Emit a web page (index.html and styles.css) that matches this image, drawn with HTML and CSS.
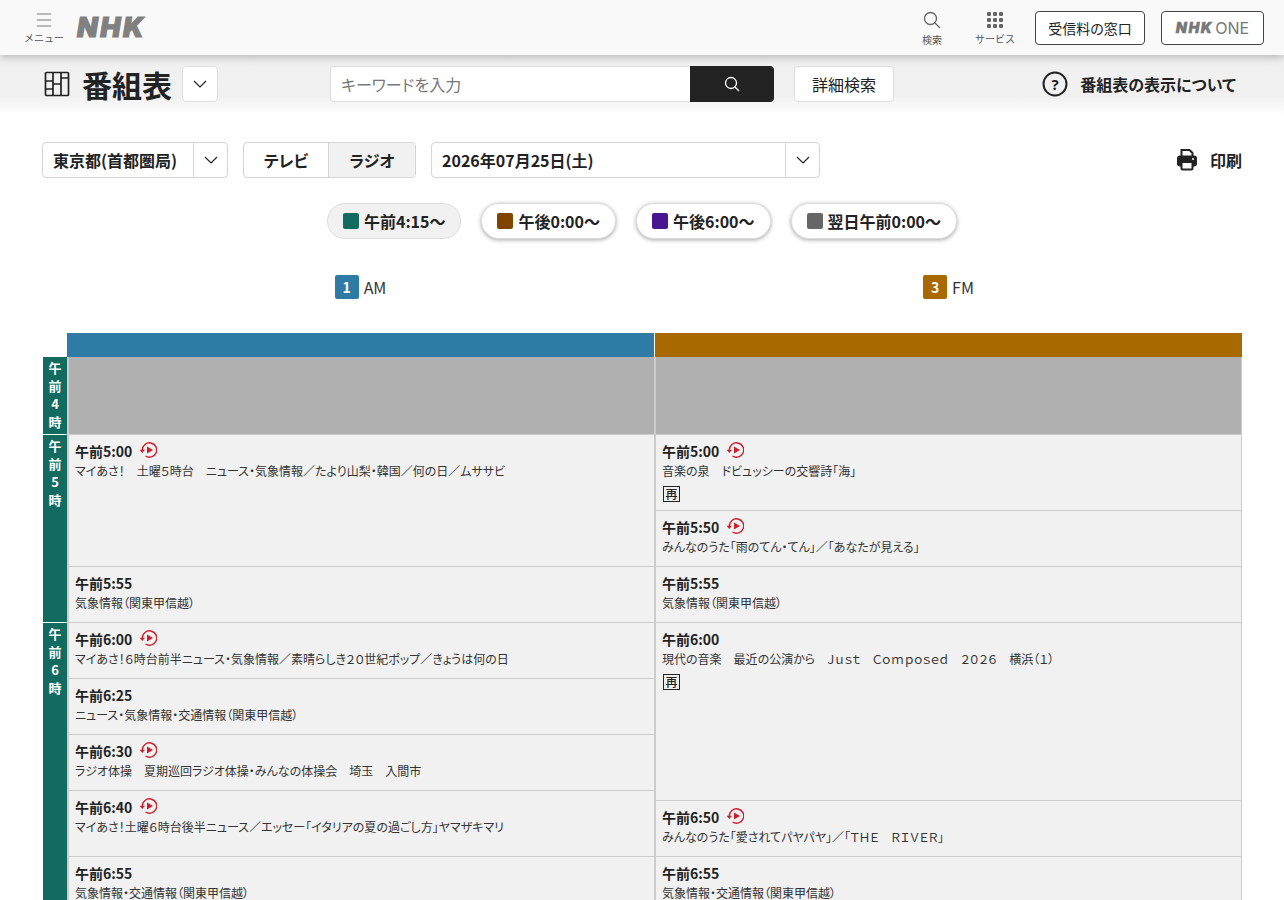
FILE: index.html
```html
<!DOCTYPE html>
<html lang="ja">
<head>
  <meta charset="UTF-8">
  <meta name="viewport" content="width=device-width, initial-scale=1.0">
  <title>番組表</title>
  <link rel="stylesheet" href="styles.css">
</head>
<body>
  <header class="topbar">
    <div class="topbar-left">
      <a class="nav-btn menu-btn">
        <svg width="14" height="14" viewBox="0 0 14 14"><path d="M0 1h14M0 7h14M0 13h14" stroke="#777" stroke-width="1.200" fill="none"/></svg>
        <span>メニュー</span>
      </a>
      <span class="nhk-logo">NHK</span>
    </div>
    <div class="topbar-right">
      <a class="nav-btn search-btn">
        <svg width="18" height="18" viewBox="0 0 18 18"><circle cx="7.500" cy="7.500" r="6" stroke="#666" stroke-width="1.300" fill="none"/><path d="M12 12l5 5" stroke="#666" stroke-width="1.300"/></svg>
        <span>検索</span>
      </a>
      <a class="nav-btn service-btn">
        <svg width="16" height="16" viewBox="0 0 16 16" fill="#666">
          <rect x="0" y="0" width="4" height="4" rx="1"/><rect x="6" y="0" width="4" height="4" rx="1"/><rect x="12" y="0" width="4" height="4" rx="1"/>
          <rect x="0" y="6" width="4" height="4" rx="1"/><rect x="6" y="6" width="4" height="4" rx="1"/><rect x="12" y="6" width="4" height="4" rx="1"/>
          <rect x="0" y="12" width="4" height="4" rx="1"/><rect x="6" y="12" width="4" height="4" rx="1"/><rect x="12" y="12" width="4" height="4" rx="1"/>
        </svg>
        <span>サービス</span>
      </a>
      <a class="outline-btn fee-btn">受信料の窓口</a>
      <a class="outline-btn one-btn"><span class="one-nhk">NHK</span><span>ONE</span></a>
    </div>
  </header>

  <section class="title-band">
    <div class="title-left">
      <svg class="title-icon" width="26" height="26" viewBox="0 0 26 26" fill="none" stroke="#222" stroke-width="1.700"><rect x="1.500" y="1.500" width="23" height="23" rx="1"/><path d="M9 1.500v23M17 1.500v23M1.500 10h7.500M1.500 18h7.500M9 13h8M17 7h7.500"/></svg>
      <h1>番組表</h1>
      <button class="chevron-box title-chevron"><svg class="chevron" width="14" height="8" viewBox="0 0 14 8"><path d="M1 1l6 6 6-6" stroke="#222" stroke-width="1.200" fill="none"/></svg></button>
    </div>
    <div class="search">
      <input class="search-input" type="text" placeholder="キーワードを入力">
      <button class="search-submit"><svg width="16" height="16" viewBox="0 0 16 16"><circle cx="7" cy="7" r="5.500" stroke="#fff" stroke-width="1.300" fill="none"/><path d="M11 11l4 4" stroke="#fff" stroke-width="1.300"/></svg></button>
    </div>
    <button class="detail-btn">詳細検索</button>
    <a class="about-link">
      <svg width="26" height="26" viewBox="0 0 26 26"><circle cx="13" cy="13" r="11.500" stroke="#222" stroke-width="2" fill="none"/><text x="13" y="18.500" text-anchor="middle" class="about-mark">?</text></svg>
      <span>番組表の表示について</span>
    </a>
  </section>

  <section class="toolbar">
    <div class="select area-select">
      <span class="select-label">東京都(首都圏局)</span>
      <span class="select-arrow"><svg width="14" height="8" viewBox="0 0 14 8"><path d="M1 1l6 6 6-6" stroke="#222" stroke-width="1.200" fill="none"/></svg></span>
    </div>
    <div class="tabs">
      <a class="tab">テレビ</a>
      <a class="tab tab-active">ラジオ</a>
    </div>
    <div class="select date-select">
      <span class="select-label">2026年07月25日(土)</span>
      <span class="select-arrow"><svg width="14" height="8" viewBox="0 0 14 8"><path d="M1 1l6 6 6-6" stroke="#222" stroke-width="1.200" fill="none"/></svg></span>
    </div>
    <a class="print-link">
      <svg width="22" height="22" viewBox="0 0 22 22">
        <path d="M5.500 1h8l3 3v5h-11z" fill="#fff" stroke="#222" stroke-width="2"/>
        <rect x="1" y="6.500" width="20" height="11" rx="3" fill="#222"/>
        <rect x="5.500" y="13" width="11" height="7.500" rx="1" fill="#fff" stroke="#222" stroke-width="2"/>
        <circle cx="17" cy="10" r="1" fill="#fff"/>
      </svg>
      <span>印刷</span>
    </a>
  </section>

  <nav class="jump">
    <a class="pill pill-active"><i class="swatch swatch-morning"></i>午前4:15～</a>
    <a class="pill"><i class="swatch swatch-noon"></i>午後0:00～</a>
    <a class="pill"><i class="swatch swatch-evening"></i>午後6:00～</a>
    <a class="pill"><i class="swatch swatch-night"></i>翌日午前0:00～</a>
  </nav>

  <main class="schedule">
    <div class="hours">
      <div class="hour hour-4"><span>午</span><span>前</span><span>4</span><span>時</span></div>
      <div class="hour hour-5"><span>午</span><span>前</span><span>5</span><span>時</span></div>
      <div class="hour hour-6"><span>午</span><span>前</span><span>6</span><span>時</span></div>
    </div>

    <div class="channel channel-am">
      <div class="channel-label"><b class="badge badge-am">1</b>AM</div>
      <div class="channel-bar bar-am"></div>
      <div class="no-program"></div>
      <article class="prog slot-132">
        <h3>午前5:00<svg class="replay"><use href="#replay"/></svg></h3>
        <p>マイあさ！　土曜５時台　ニュース・気象情報／たより山梨・韓国／何の日／ムササビ</p>
      </article>
      <article class="prog slot-56">
        <h3>午前5:55</h3>
        <p>気象情報（関東甲信越）</p>
      </article>
      <article class="prog slot-56">
        <h3>午前6:00<svg class="replay"><use href="#replay"/></svg></h3>
        <p>マイあさ！６時台前半ニュース・気象情報／素晴らしき２０世紀ポップ／きょうは何の日</p>
      </article>
      <article class="prog slot-56">
        <h3>午前6:25</h3>
        <p>ニュース・気象情報・交通情報（関東甲信越）</p>
      </article>
      <article class="prog slot-56">
        <h3>午前6:30<svg class="replay"><use href="#replay"/></svg></h3>
        <p>ラジオ体操　夏期巡回ラジオ体操・みんなの体操会　埼玉　入間市</p>
      </article>
      <article class="prog slot-66">
        <h3>午前6:40<svg class="replay"><use href="#replay"/></svg></h3>
        <p>マイあさ！土曜６時台後半ニュース／エッセー「イタリアの夏の過ごし方」ヤマザキマリ</p>
      </article>
      <article class="prog slot-56">
        <h3>午前6:55</h3>
        <p>気象情報・交通情報（関東甲信越）</p>
      </article>
    </div>

    <div class="channel channel-fm">
      <div class="channel-label"><b class="badge badge-fm">3</b>FM</div>
      <div class="channel-bar bar-fm"></div>
      <div class="no-program"></div>
      <article class="prog slot-76">
        <h3>午前5:00<svg class="replay"><use href="#replay"/></svg></h3>
        <p>音楽の泉　ドビュッシーの交響詩「海」</p>
        <span class="re-mark">再</span>
      </article>
      <article class="prog slot-56">
        <h3>午前5:50<svg class="replay"><use href="#replay"/></svg></h3>
        <p>みんなのうた「雨のてん・てん」／「あなたが見える」</p>
      </article>
      <article class="prog slot-56">
        <h3>午前5:55</h3>
        <p>気象情報（関東甲信越）</p>
      </article>
      <article class="prog slot-178">
        <h3>午前6:00</h3>
        <p>現代の音楽　最近の公演から　Ｊｕｓｔ　Ｃｏｍｐｏｓｅｄ　２０２６　横浜（１）</p>
        <span class="re-mark">再</span>
      </article>
      <article class="prog slot-56">
        <h3>午前6:50<svg class="replay"><use href="#replay"/></svg></h3>
        <p>みんなのうた「愛されてパヤパヤ」／「ＴＨＥ　ＲＩＶＥＲ」</p>
      </article>
      <article class="prog slot-56">
        <h3>午前6:55</h3>
        <p>気象情報・交通情報（関東甲信越）</p>
      </article>
    </div>
  </main>

  <svg class="defs" width="0" height="0">
    <symbol id="replay" viewBox="0 0 18 18">
      <path d="M3.300 9A7.200 7.200 0 1 1 6.500 15" stroke="#c8202c" stroke-width="1.400" fill="none"/>
      <path d="M0.600 8.800h5.400L3.300 12z" fill="#c8202c"/>
      <path d="M8 5.500l6 3.500-6 3.500z" fill="#c8202c"/>
    </symbol>
  </svg>
</body>
</html>
```

FILE: styles.css
```css
* {
  box-sizing: border-box;
}

html, body {
  margin: 0;
  padding: 0;
}

body {
  height: 900px;
  overflow: hidden;
  background-color: #fff;
  color: #222;
  font-family: "Noto Sans CJK JP", "Noto Sans", sans-serif;
  font-feature-settings: "palt";
}

a {
  color: inherit;
  text-decoration: none;
}

button {
  font-family: inherit;
  font-feature-settings: inherit;
  cursor: pointer;
}

.defs {
  position: absolute;
}

/* top bar */
.topbar {
  position: relative;
  z-index: 2;
  display: flex;
  justify-content: space-between;
  align-items: center;
  height: 55px;
  padding: 0 20px 0 24px;
  background-color: #f9f9f9;
  box-shadow: 0 2px 8px rgba(0, 0, 0, 0.25);
}

.topbar-left, .topbar-right {
  display: flex;
  align-items: center;
}

.nav-btn {
  display: flex;
  flex-direction: column;
  align-items: center;
  gap: 5px;
  font-size: 10px;
  line-height: 12px;
  color: #555;
  white-space: nowrap;
  font-feature-settings: normal;
}

.menu-btn {
  width: 40px;
  margin-top: 2px;
}

.nhk-logo {
  margin-left: 13px;
  font-family: "Inter", sans-serif;
  font-size: 27px;
  font-weight: 900;
  font-style: italic;
  letter-spacing: 2.500px;
  color: #808080;
  -webkit-text-stroke: 1px #808080;
  paint-order: stroke;
}

.search-btn {
  margin-right: 33px;
  margin-top: 1px;
}

.service-btn {
  margin-right: 20px;
  margin-top: 1px;
}

.outline-btn {
  display: flex;
  align-items: center;
  justify-content: center;
  height: 34px;
  background-color: #fff;
  border: 1px solid #444;
  border-radius: 4px;
}

.fee-btn {
  width: 110px;
  font-size: 14px;
  margin-right: 16px;
}

.one-btn {
  width: 103px;
  gap: 2px;
  font-family: "Inter", sans-serif;
  font-size: 16px;
  color: #777;
}

.one-nhk {
  font-weight: 900;
  font-style: italic;
  font-size: 14.500px;
  letter-spacing: 1.500px;
  -webkit-text-stroke: 0.4px #777;
}

/* title band */
.title-band {
  display: flex;
  align-items: center;
  height: 60px;
  padding: 0 48px 3px 44px;
  background: linear-gradient(#f0f0f0 0, #f1f1f1 70%, #fff 100%);
}

.title-left {
  display: flex;
  align-items: center;
  width: 286px;
}

.title-icon {
  margin-right: 12px;
}

h1 {
  margin: 0 10px 0 0;
  font-size: 30px;
  line-height: 36px;
  font-weight: 700;
  color: #222;
  white-space: nowrap;
}

.chevron-box, .detail-btn {
  background-color: #fff;
  border: 1px solid #ddd;
  border-radius: 4px;
}

.title-chevron {
  display: flex;
  align-items: center;
  justify-content: center;
  width: 36px;
  height: 36px;
  padding: 0;
}

.search {
  display: flex;
  width: 444px;
  height: 36px;
}

.search-input {
  flex: 1;
  min-width: 0;
  padding: 0 10px;
  font-family: inherit;
  font-feature-settings: inherit;
  font-size: 16px;
  background-color: #fff;
  border: 1px solid #ddd;
  border-right: none;
  border-radius: 4px 0 0 4px;
  outline: none;
}

.search-input::placeholder {
  color: #777;
}

.search-submit {
  display: flex;
  align-items: center;
  justify-content: center;
  width: 84px;
  margin-left: -1px;
  padding: 0;
  background-color: #222;
  border: none;
  border-radius: 0 4px 4px 0;
}

.detail-btn {
  width: 100px;
  height: 36px;
  margin-left: 20px;
  font-size: 16px;
  color: #222;
}

.about-link {
  display: flex;
  align-items: center;
  gap: 12px;
  margin-left: auto;
  font-size: 16px;
  font-weight: 700;
}

.about-mark {
  font-family: "Noto Sans", sans-serif;
  font-size: 15px;
  font-weight: 700;
  fill: #222;
}

/* toolbar */
.toolbar {
  display: flex;
  align-items: center;
  height: 36px;
  margin-top: 27px;
  padding: 0 42px;
}

.select {
  display: flex;
  height: 36px;
  background-color: #fff;
  border: 1px solid #d5d5d5;
  border-radius: 4px;
}

.select-label {
  flex: 1;
  padding-left: 10px;
  font-size: 16px;
  line-height: 34px;
  font-weight: 700;
  white-space: nowrap;
}

.select-arrow {
  display: flex;
  align-items: center;
  justify-content: center;
  width: 34px;
  border-left: 1px solid #d5d5d5;
}

.area-select {
  width: 186px;
}

.date-select {
  width: 389px;
}

.tabs {
  display: flex;
  width: 173px;
  height: 36px;
  margin: 0 15px;
  border: 1px solid #d5d5d5;
  border-radius: 4px;
  overflow: hidden;
}

.tab {
  width: 84px;
  text-align: center;
  font-size: 16px;
  line-height: 34px;
  font-weight: 700;
}

.tab-active {
  width: 87px;
  background-color: #f1f1f1;
  border-left: 1px solid #d5d5d5;
}

.print-link {
  display: flex;
  align-items: center;
  gap: 12px;
  margin-left: auto;
  font-size: 16px;
  font-weight: 700;
}

/* time jump */
.jump {
  display: flex;
  justify-content: center;
  gap: 20px;
  margin-top: 25px;
}

.pill {
  display: flex;
  align-items: center;
  gap: 5px;
  height: 36px;
  padding: 0 15px;
  font-size: 16px;
  font-weight: 700;
  background-color: #fff;
  border: 1px solid #ddd;
  border-radius: 18px;
  box-shadow: 0 1px 4px rgba(0, 0, 0, 0.35);
}

.pill-active {
  background-color: #f1f1f1;
  box-shadow: none;
}

.swatch {
  width: 16px;
  height: 16px;
  border-radius: 2px;
}

.swatch-morning {
  background-color: #136a5f;
}

.swatch-noon {
  background-color: #7f4500;
}

.swatch-evening {
  background-color: #4a1591;
}

.swatch-night {
  background-color: #666;
}

/* schedule grid */
.schedule {
  display: flex;
  align-items: flex-start;
  gap: 1px;
  margin-top: 36px;
  padding: 0 42px 0 43px;
}

.hours {
  width: 24px;
  margin-top: 82px;
  margin-right: -1px;
}

.hour {
  display: flex;
  flex-direction: column;
  align-items: center;
  padding-top: 2px;
  margin-bottom: 1px;
  background-color: #136a5f;
  color: #fff;
  font-size: 13px;
  line-height: 18px;
  font-weight: 700;
}

.hour-4 {
  height: 77px;
}

.hour-5 {
  height: 187px;
}

.hour-6 {
  height: 300px;
}

.channel {
  flex: 1;
  min-width: 0;
}

.channel-label {
  display: flex;
  align-items: center;
  justify-content: center;
  gap: 5px;
  height: 24px;
  margin-bottom: 34px;
  font-size: 16px;
  color: #333;
}

.badge {
  width: 24px;
  height: 24px;
  border-radius: 2px;
  color: #fff;
  font-size: 14px;
  line-height: 24px;
  text-align: center;
}

.badge-am, .bar-am {
  background-color: #2e7ca6;
}

.badge-fm, .bar-fm {
  background-color: #a86a00;
}

.channel-bar {
  height: 24px;
}

.no-program {
  height: 78px;
  background-color: #b0b0b0;
  border-left: 2px solid #ccc;
  border-bottom: 1px solid #ccc;
}

.prog {
  padding: 6px 8px 0 6px;
  background-color: #f1f1f1;
  border-left: 2px solid #ccc;
  border-bottom: 1px solid #ccc;
  overflow: hidden;
}

.channel-am .prog, .channel-am .no-program {
  box-shadow: 1px 0 0 #ccc;
  overflow: visible;
}

.channel-fm .prog, .channel-fm .no-program {
  border-left-width: 1px;
  border-right: 1px solid #ccc;
}

.prog h3 {
  display: flex;
  align-items: center;
  gap: 7px;
  margin: 0;
  font-size: 14px;
  line-height: 20px;
  font-weight: 700;
}

.prog p {
  margin: 1px 0 0;
  font-size: 12px;
  line-height: 18px;
  white-space: nowrap;
  color: #333;
}

.replay {
  width: 18px;
  height: 18px;
  margin-top: -2px;
}

.re-mark {
  display: block;
  width: 17px;
  height: 16px;
  margin-top: 6px;
  margin-left: 1px;
  font-size: 12px;
  line-height: 13px;
  font-weight: 500;
  text-align: center;
  color: #222;
  border: 1px solid #222;
}

.slot-56 {
  height: 56px;
}

.slot-66 {
  height: 66px;
}

.slot-76 {
  height: 76px;
}

.slot-132 {
  height: 132px;
}

.slot-178 {
  height: 178px;
}
```
